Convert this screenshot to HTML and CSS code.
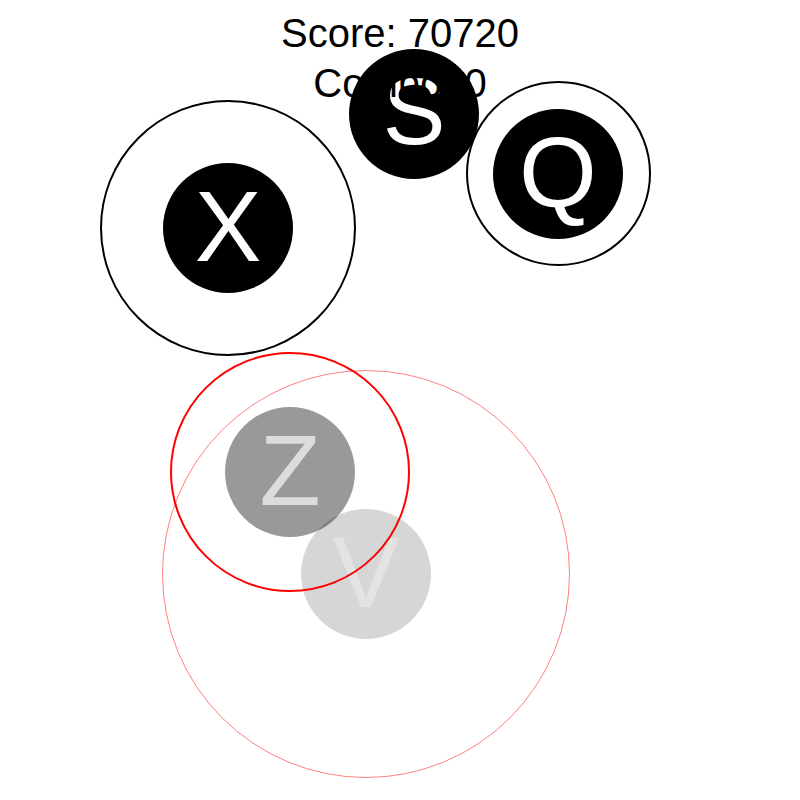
FILE: index.html
```html
<!DOCTYPE html>
<html>
<head>
<meta charset="utf-8">
<title>Game</title>
<link rel="stylesheet" href="styles.css">
</head>
<body>
<div class="stage">
  <div class="ring ring-v"></div>
  <div class="node node-v"><span>V</span></div>
  <div class="node node-z"><span>Z</span></div>
  <div class="ring ring-z"></div>
  <div class="ring ring-x"></div>
  <div class="node node-x"><span>X</span></div>
  <div class="ring ring-q"></div>
  <div class="node node-q"><span>Q</span></div>
  <div class="node node-s"><span>S</span></div>
</div>
<div class="hud">
  <div class="hud-line">Score: 70720</div>
  <div class="hud-line">Combo: 0</div>
</div>
</body>
</html>
```

FILE: styles.css
```css
html, body {
  background: #fff;
}
body {
  margin: 0;
  width: 800px;
  height: 800px;
  position: relative;
  overflow: hidden;
  font-family: "Liberation Sans", Arial, sans-serif;
}
.stage {
  position: absolute;
  left: 0;
  top: 0;
  width: 800px;
  height: 800px;
}
.hud {
  position: relative;
  z-index: 2;
  padding-top: 8px;
  text-align: center;
  font-size: 40px;
  line-height: 50px;
  color: #000;
}
.ring {
  position: absolute;
  box-sizing: border-box;
  border-radius: 50%;
  border: 2px solid #000;
}
.ring-x { left: 100px; top: 100px; width: 256px; height: 256px; }
.ring-q { left: 465.5px; top: 81px; width: 185px; height: 185px; }
.ring-z { left: 170px; top: 352px; width: 240px; height: 240px; border-color: #f00; }
.ring-v { left: 162px; top: 370px; width: 408px; height: 408px; border: 1px solid rgba(255, 0, 0, 0.5); }

.node {
  position: absolute;
  width: 130px;
  height: 130px;
  border-radius: 50%;
  background: #000;
  color: #fff;
  display: flex;
  align-items: center;
  justify-content: center;
  font-size: 100px;
  box-sizing: border-box;
  padding-bottom: 4px;
}
.node span { display: block; }
.node-x { left: 163px; top: 163px; }
.node-q { left: 493px; top: 109px; }
.node-s { left: 349px; top: 49px; font-size: 94px; padding-bottom: 4px; }
.node-z { left: 225px; top: 407px; background: rgba(0, 0, 0, 0.4); color: #dcdcdc; }
.node-v { left: 301px; top: 509px; background: rgba(0, 0, 0, 0.16); color: #e3e3e3; }
```
